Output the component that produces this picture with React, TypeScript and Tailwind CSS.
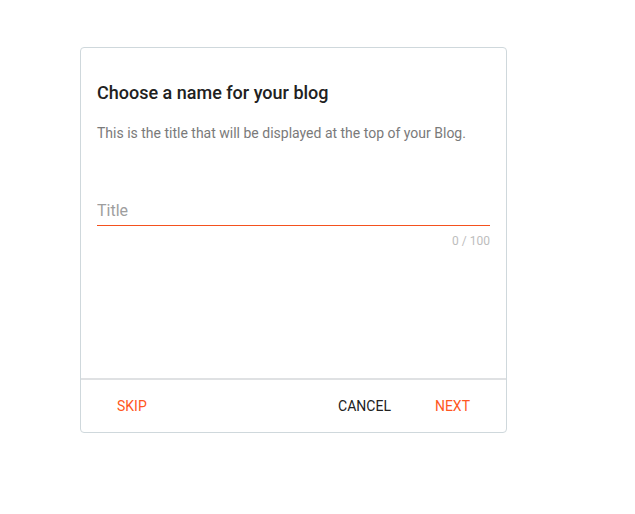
export default function App() {
  return (
    <div
      className="min-h-screen w-full bg-white pt-[47px] pl-[80px]"
      style={{ fontFamily: "Roboto, 'Liberation Sans', sans-serif" }}
    >
      <div className="w-[427px] h-[386px] flex flex-col rounded-[4px] border border-[#cfd8dc] bg-white">
        {/* body */}
        <div className="flex-1 px-4 pt-[33px]">
          <h1 className="text-[18px] leading-6 font-medium text-[#212121]">
            Choose a name for your blog
          </h1>
          <p className="mt-[18px] text-[14px] leading-5 text-[#7a7a7a]">
            This is the title that will be displayed at the top of your Blog.
          </p>

          <div className="mt-[56px]">
            <input
              placeholder="Title"
              className="w-full h-[26px] border-b border-[#f4511e] bg-transparent pb-[3px] text-[16px] text-[#212121] placeholder:text-[#9e9e9e] outline-none"
            />
            <div className="mt-[7px] text-right text-[12px] leading-4 text-[#bdbdbd]">
              0 / 100
            </div>
          </div>
        </div>

        {/* footer */}
        <div className="h-[54px] border-t-2 border-[#dfe1e3] px-5 flex items-center">
          <button className="px-4 text-[14px] text-[#ff5722]">SKIP</button>
          <div className="flex-1" />
          <button className="px-4 text-[14px] text-[#212121]">CANCEL</button>
          <button className="ml-3 px-4 text-[14px] text-[#ff5722]">NEXT</button>
        </div>
      </div>
    </div>
  );
}
